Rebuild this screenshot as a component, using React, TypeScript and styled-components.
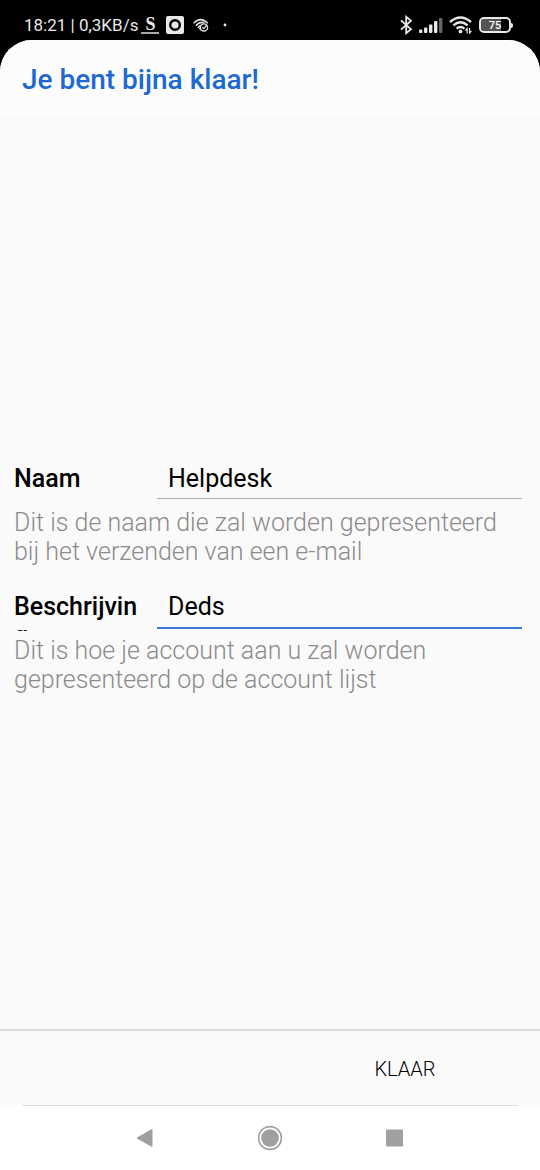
import React, { useState } from "react";
import styled, { createGlobalStyle } from "styled-components";

const GlobalStyle = createGlobalStyle`
  * { box-sizing: border-box; }
  body {
    margin: 0;
    background: #000;
    font-family: Roboto, "Noto Sans", sans-serif;
  }
  button, input { font-family: inherit; }
`;

const Screen = styled.div`
  min-height: 100vh;
  display: flex;
  flex-direction: column;
  background: #000;
`;

const StatusBar = styled.div`
  display: flex;
  justify-content: space-between;
  align-items: center;
  height: 40px;
  padding: 10px 27px 0 24px;
  color: #e8e8e8;
  font-size: 17px;
  line-height: 20px;
`;

const StatusGroup = styled.div<{ $gap: number }>`
  display: flex;
  align-items: center;
  gap: ${(p) => p.$gap}px;
`;

const StatusText = styled.span`
  white-space: pre;
`;

const LetterIcon = styled.span`
  width: 18px;
  height: 18px;
  border-bottom: 2px solid #aaa;
  font: bold 18px/16px "Liberation Serif", serif;
  text-align: center;
`;

const Sheet = styled.div`
  flex: 1;
  display: flex;
  flex-direction: column;
  background: #fafafa;
  border-radius: 32px 32px 0 0;
  overflow: hidden;
`;

const Header = styled.header`
  padding: 24px 22px 20px;
  background: #fcfcfc;
`;

const Title = styled.h1`
  margin: 0;
  color: #1e69d2;
  font-size: 28px;
  font-weight: 500;
  line-height: 32px;
`;

const Form = styled.form`
  flex: 1;
  display: flex;
  flex-direction: column;
`;

const Fields = styled.div`
  flex: 1;
  display: flex;
  flex-direction: column;
  justify-content: center;
  gap: 26px;
  padding: 13px 18px 0 14px;
`;

const FieldRow = styled.div`
  display: flex;
  height: 39px;
`;

const Label = styled.label`
  width: 128px;
  margin-right: 15px;
  overflow: hidden;
  word-break: break-all;
  color: #000;
  font-size: 25px;
  font-weight: 500;
  line-height: 29px;
`;

const Input = styled.input<{ $active?: boolean }>`
  flex: 1;
  min-width: 0;
  height: ${(p) => (p.$active ? 37 : 35)}px;
  padding: 0 11px 6px;
  border: 0;
  border-bottom: ${(p) => (p.$active ? "2px solid #3b78d8" : "1px solid #b0b0b0")};
  border-radius: 0;
  outline: 0;
  background: transparent;
  color: #000;
  font-size: 25px;
  line-height: 29px;
`;

const Hint = styled.p`
  margin: 5px 0 0;
  color: #8c8c8c;
  font-size: 25px;
  font-weight: 300;
  line-height: 29px;
`;

const Actions = styled.div`
  display: flex;
  justify-content: flex-end;
  border-top: 2px solid #dcdcdc;
`;

const DoneButton = styled.button`
  width: 50%;
  height: 74px;
  padding: 2px 0 0;
  border: 0;
  background: transparent;
  color: #000;
  font-size: 20px;
  font-weight: 300;
  line-height: 24px;
`;

const NavBar = styled.nav`
  padding: 0 22px;
  background: #fff;
`;

const NavButtons = styled.div`
  display: flex;
  justify-content: center;
  gap: 77px;
  padding: 8px 0;
  border-top: 1px solid #dedede;
`;

const NavButton = styled.button`
  display: flex;
  align-items: center;
  justify-content: center;
  width: 48px;
  height: 48px;
  padding: 0;
  border: 0;
  background: transparent;
`;

const Battery = styled.span`
  display: flex;
  align-items: center;
`;

const BatteryCase = styled.span`
  width: 32px;
  height: 16px;
  border: 2px solid #e8e8e8;
  border-radius: 5px;
  background: linear-gradient(90deg, #555 70%, #000 70%);
  background-clip: padding-box;
  color: #fff;
  font-size: 11px;
  font-weight: 500;
  line-height: 13px;
  text-align: center;
`;

const BatteryTip = styled.span`
  width: 2px;
  height: 5px;
  border-radius: 0 2px 2px 0;
  background: #e8e8e8;
`;

const RecordIcon = () => (
  <svg width="18" height="18" viewBox="0 0 18 18">
    <rect width="18" height="18" rx="2" fill="#e8e8e8" />
    <circle cx="9" cy="9" r="4.8" fill="none" stroke="#000" strokeWidth="2.4" />
  </svg>
);

const WifiCheckIcon = () => (
  <svg width="16" height="14" viewBox="0 0 16 14" fill="none" stroke="#e0e0e0" strokeWidth="1.6">
    <path d="M.6 5.2Q7.6-2 14.8 5.2" />
    <path d="M2.8 7.6Q6.8 3.2 11.4 4.8" />
    <path d="M5 9.8Q6.2 7.8 8 7.6" />
    <circle cx="11" cy="9.4" r="3.6" strokeWidth="1.3" />
    <path d="M5.6 10.4l2.6 2.6-.8-3.400z" fill="#e0e0e0" stroke="none" />
    <path d="M9.400 9.200l1.400 1.400 3-3.600" strokeWidth="1.3" />
  </svg>
);

const DotIcon = () => (
  <svg width="4" height="4" viewBox="0 0 4 4">
    <circle cx="2" cy="2" r="1.4" fill="#e8e8e8" />
  </svg>
);

const BluetoothIcon = () => (
  <svg width="13" height="20" viewBox="0 0 13 20" fill="none" stroke="#e8e8e8" strokeWidth="1.8">
    <path d="M1 5.4l10 8.8-4.8 4V1.8l4.8 4L1 14.6" />
  </svg>
);

const SignalIcon = () => (
  <svg width="24" height="16" viewBox="0 0 24 16" fill="#e8e8e8">
    <rect x="0" y="12.500" width="3.400" height="3.500" rx="1" />
    <rect x="5" y="10.500" width="3.400" height="5.500" rx="1" />
    <rect x="10" y="7.500" width="3.400" height="8.500" rx="1" />
    <rect x="15" y="4" width="3.400" height="12" rx="1" />
    <rect x="20" y="1" width="3.400" height="15" rx="1" fill="#666" />
  </svg>
);

const WifiIcon = () => (
  <svg width="24" height="18" viewBox="0 0 24 18" fill="none" stroke="#e8e8e8" strokeWidth="2.4">
    <path d="M1 6Q11.500-3 22 6" />
    <path d="M4.400 9.400Q11.500 3.200 18.600 9.400" />
    <path d="M7.600 12.600Q11.500 9.200 15.400 12.600" />
    <circle cx="11.500" cy="15.400" r="1.900" fill="#e8e8e8" stroke="none" />
    <path d="M18.200 17.500v-5l-1.800 2.200M20.600 12v5l1.800-2.200" strokeWidth="1.200" />
  </svg>
);

const BackIcon = () => (
  <svg width="18" height="20" viewBox="0 0 18 20">
    <path d="M16 1.500v17L1 10z" fill="#a0a0a0" stroke="#a0a0a0" strokeLinejoin="round" />
  </svg>
);

const HomeIcon = () => (
  <svg width="26" height="26" viewBox="0 0 26 26">
    <circle cx="13" cy="13" r="11.400" fill="none" stroke="#a0a0a0" strokeWidth="1.600" />
    <circle cx="13" cy="13" r="8.800" fill="#a0a0a0" />
  </svg>
);

const RecentIcon = () => (
  <svg width="18" height="18" viewBox="0 0 18 18">
    <rect x="0" y="0.500" width="17" height="17" rx="1" fill="#a0a0a0" />
  </svg>
);

export default function App() {
  const [name, setName] = useState("Helpdesk");
  const [description, setDescription] = useState("Deds");

  return (
    <Screen>
      <GlobalStyle />
      <StatusBar>
        <StatusGroup $gap={3}>
          <StatusText>18:21 | 0,3KB/s</StatusText>
          <StatusGroup $gap={7}>
            <LetterIcon>S</LetterIcon>
            <StatusGroup $gap={9}>
              <RecordIcon />
              <StatusGroup $gap={14}>
                <WifiCheckIcon />
                <DotIcon />
              </StatusGroup>
            </StatusGroup>
          </StatusGroup>
        </StatusGroup>
        <StatusGroup $gap={6}>
          <BluetoothIcon />
          <SignalIcon />
          <WifiIcon />
          <Battery>
            <BatteryCase>75</BatteryCase>
            <BatteryTip />
          </Battery>
        </StatusGroup>
      </StatusBar>
      <Sheet>
        <Header>
          <Title>Je bent bijna klaar!</Title>
        </Header>
        <Form onSubmit={(e) => e.preventDefault()}>
          <Fields>
            <div>
              <FieldRow>
                <Label htmlFor="name">Naam</Label>
                <Input
                  id="name"
                  aria-describedby="name-hint"
                  value={name}
                  onChange={(e) => setName(e.target.value)}
                />
              </FieldRow>
              <Hint id="name-hint">
                Dit is de naam die zal worden gepresenteerd bij het verzenden van een e-mail
              </Hint>
            </div>
            <div>
              <FieldRow>
                <Label htmlFor="description">Beschrijving</Label>
                <Input
                  id="description"
                  $active
                  aria-describedby="description-hint"
                  value={description}
                  onChange={(e) => setDescription(e.target.value)}
                />
              </FieldRow>
              <Hint id="description-hint">
                Dit is hoe je account aan u zal worden gepresenteerd op de account lijst
              </Hint>
            </div>
          </Fields>
          <Actions>
            <DoneButton type="submit">KLAAR</DoneButton>
          </Actions>
        </Form>
      </Sheet>
      <NavBar>
        <NavButtons>
          <NavButton type="button" aria-label="Terug"><BackIcon /></NavButton>
          <NavButton type="button" aria-label="Start"><HomeIcon /></NavButton>
          <NavButton type="button" aria-label="Recent"><RecentIcon /></NavButton>
        </NavButtons>
      </NavBar>
    </Screen>
  );
}
